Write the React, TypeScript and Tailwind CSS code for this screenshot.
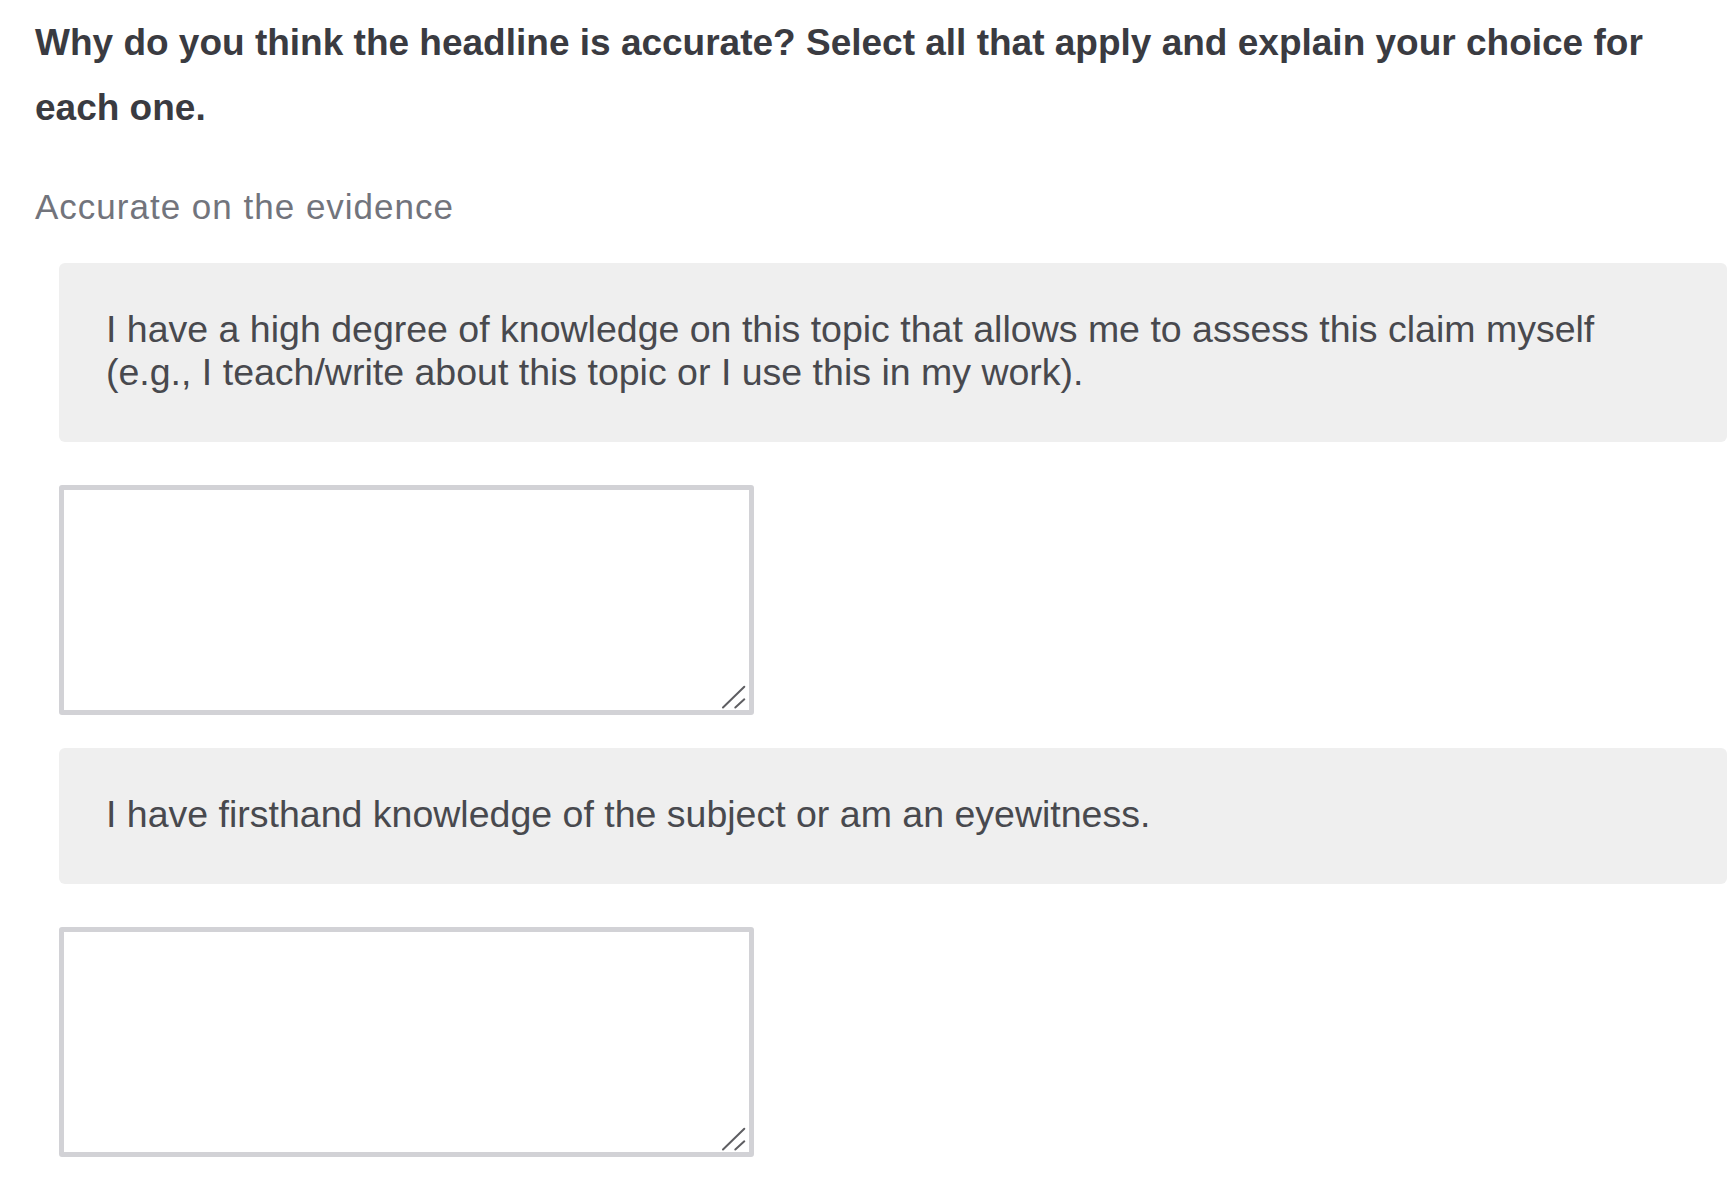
const options = [
  {
    text: "I have a high degree of knowledge on this topic that allows me to assess this claim myself (e.g., I teach/write about this topic or I use this in my work).",
  },
  {
    text: "I have firsthand knowledge of the subject or am an eyewitness.",
  },
];

const ResizeGrip = () => (
  <svg
    className="pointer-events-none absolute bottom-[5px] right-[5px] overflow-visible"
    width="24"
    height="24"
    viewBox="0 0 24 24"
  >
    <line x1="-2" y1="21.5" x2="19.3" y2="0.7" stroke="#5e5e62" strokeWidth="2" strokeLinecap="round" />
    <line x1="10.3" y1="21.5" x2="19.3" y2="13.3" stroke="#5e5e62" strokeWidth="2" strokeLinecap="round" />
  </svg>
);

export default function App() {
  return (
    <div className="min-h-screen bg-white pl-[35px] pr-[8px] pt-[10px] font-['Liberation_Sans',Helvetica,Arial,sans-serif]">
      <h2 className="text-[37px] font-bold leading-[65px] text-[#3a3b41]">
        Why do you think the headline is accurate? Select all that apply and explain your choice for each one.
      </h2>
      <p className="mt-[46px] text-[35px] leading-[41px] tracking-[1px] text-[#72747c]">
        Accurate on the evidence
      </p>
      <div className="ml-[24px] mt-[36px] flex flex-col">
        {options.map((option, idx) => (
          <div key={idx} className={idx > 0 ? "mt-[33px] flex flex-col" : "flex flex-col"}>
            <div className="rounded-[6px] bg-[#efefef] pb-[48px] pl-[47px] pr-[47px] pt-[45px] text-[37.5px] leading-[43px] text-[#48494e]">
              {option.text}
            </div>
            <div className="relative mt-[43px] h-[230px] w-[695px]">
              <textarea
                className="block h-full w-full resize-none rounded-[3px] border-[5px] border-[#d2d2d6] bg-white outline-none"
                aria-label={option.text}
              />
              <ResizeGrip />
            </div>
          </div>
        ))}
      </div>
    </div>
  );
}
